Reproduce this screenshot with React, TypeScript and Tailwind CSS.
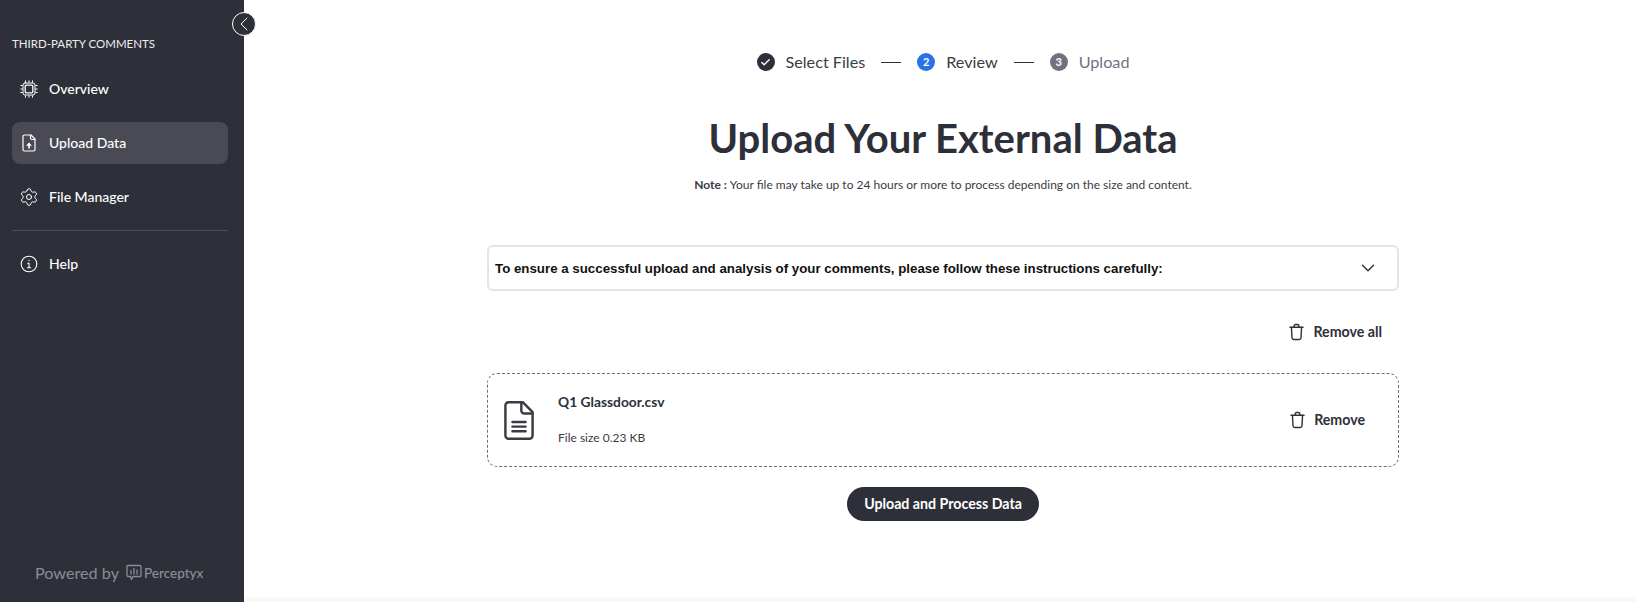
import { ChevronDown, ChevronLeft, Settings, Check } from "lucide-react";

const font = "font-['Lato','Liberation_Sans',sans-serif]";

function Trash() {
  return (
    <svg width="15" height="18" viewBox="0 0 16 18" fill="none" stroke="#2d3039" strokeWidth="1.5" strokeLinecap="round" strokeLinejoin="round">
      <path d="M1 4h14" />
      <path d="M5.5 3.8V2.4C5.5 1.6 6.1 1 6.9 1h2.2c.8 0 1.4.6 1.4 1.4v1.4" />
      <path d="M2.6 4.2l.6 11c.05.9.7 1.8 1.8 1.8h6c1.1 0 1.75-.9 1.8-1.8l.6-11" />
    </svg>
  );
}

function Chip() {
  return (
    <svg width="20" height="20" viewBox="0 0 20 20" fill="none" stroke="#fff" strokeLinecap="round">
      <rect x="4" y="4" width="12" height="12" rx="2" strokeWidth="1" />
      <rect x="6.2" y="6.2" width="7.6" height="7.6" rx="1" strokeWidth="1.3" />
      <path strokeWidth="1" d="M6.5 1.8V3.2M10 1.8V3.2M13.5 1.8V3.2M6.5 16.8V18.2M10 16.8V18.2M13.5 16.8V18.2M1.8 6.5H3.2M1.8 10H3.2M1.8 13.5H3.2M16.8 6.5H18.2M16.8 10H18.2M16.8 13.5H18.2" />
    </svg>
  );
}

function FileArrow() {
  return (
    <svg width="20" height="20" viewBox="0 0 20 20" fill="none" stroke="#fff" strokeWidth="1.2" strokeLinecap="round" strokeLinejoin="round">
      <path d="M12 2H5.5A1.5 1.5 0 0 0 4 3.5v13A1.5 1.5 0 0 0 5.5 18h9a1.5 1.5 0 0 0 1.5-1.5V6z" />
      <path d="M11.5 2.2V5a1.5 1.5 0 0 0 1.5 1.5h3" />
      <path d="M10 15v-4.5" strokeWidth="1.6" />
      <path d="M7.8 12.3L10 10l2.2 2.3z" fill="#fff" strokeWidth="0.6" />
    </svg>
  );
}

function InfoSerif() {
  return (
    <svg width="20" height="20" viewBox="0 0 20 20" fill="none" stroke="#fff" strokeWidth="1.1" strokeLinecap="round">
      <circle cx="10" cy="10" r="7.8" />
      <circle cx="10" cy="6.5" r="0.7" fill="#fff" stroke="none" />
      <path d="M8.6 9.2H10v4.6M8.4 13.8h3.2" />
    </svg>
  );
}

function NavItem({ icon, label, active }: { icon: React.ReactNode; label: string; active?: boolean }) {
  return (
    <div className={`flex h-[42px] items-center rounded-lg pl-[7px] text-[14px] font-medium text-white ${active ? "bg-[#494a54]" : ""}`}>
      <span className="flex w-[30px] shrink-0 items-center justify-start">{icon}</span>
      <span className="pb-[2px]">{label}</span>
    </div>
  );
}

function Step({ mark, label, bg, text }: { mark: React.ReactNode; label: string; bg: string; text: string }) {
  return (
    <div className="flex items-center gap-[11px]">
      <span className={`flex h-[18px] w-[18px] items-center justify-center rounded-full text-[11px] font-bold text-white ${bg}`}>{mark}</span>
      <span className={`text-[16.2px] ${text}`}>{label}</span>
    </div>
  );
}

export default function App() {
  return (
    <div className={`flex h-[602px] w-[1637px] overflow-hidden bg-white text-[#2d3039] ${font}`}>
      <aside className="relative flex w-[244px] shrink-0 flex-col bg-[#2d3039] pl-3 pr-4 text-white">
        <button className="absolute right-[-12px] top-[12px] flex h-[24px] w-[24px] items-center justify-center rounded-full border border-white bg-[#2d3039]">
          <ChevronLeft size={24} strokeWidth={1} color="#fff" className="shrink-0" />
        </button>
        <div className="mt-[35px] text-[11.5px] leading-[18px] text-[#eeeeee]">THIRD-PARTY COMMENTS</div>
        <nav className="mt-[15px] flex flex-col gap-[12px]">
          <NavItem icon={<Chip />} label="Overview" />
          <NavItem active icon={<FileArrow />} label="Upload Data" />
          <NavItem icon={<Settings size={20} strokeWidth={1.2} />} label="File Manager" />
        </nav>
        <div className="mt-[12px] h-px bg-[#4c4e57]" />
        <div className="mt-[12px]">
          <NavItem icon={<InfoSerif />} label="Help" />
        </div>
        <div className="mt-auto mb-[17px] ml-[23px] flex items-center gap-[7px] whitespace-nowrap text-[#8b8d93]">
          <span className="text-[16.2px]">Powered by</span>
          <span className="flex items-center gap-[2px] text-[13.5px] font-medium">
            <svg width="16" height="17" viewBox="0 0 16 17" fill="none" stroke="#8b8d93" strokeWidth="1.3" strokeLinejoin="round" strokeLinecap="round">
              <path d="M2 1.5h12a1 1 0 0 1 1 1v9a1 1 0 0 1-1 1H7l-1.5 3-1-3H2a1 1 0 0 1-1-1v-9a1 1 0 0 1 1-1z" />
              <path d="M5 6.5v3.5M8 4.5v5.5M11 6v4" />
            </svg>
            Perceptyx
          </span>
        </div>
      </aside>
      <main className="flex min-w-0 flex-1 flex-col">
        <div className="flex flex-1 flex-col items-center pl-[5px]">
          <div className="mt-[52px] flex h-5 items-center">
            <Step bg="bg-[#2d3039]" mark={<Check size={11} strokeWidth={3} />} label="Select Files" text="text-[#3a3c44]" />
            <span className="mx-4 h-px w-5 bg-[#2d3039]" />
            <Step bg="bg-[#2a72e5]" mark="2" label="Review" text="text-[#3a3c44]" />
            <span className="mx-4 h-px w-5 bg-[#2d3039]" />
            <Step bg="bg-[#71727f]" mark="3" label="Upload" text="text-[#71727f]" />
          </div>
          <h1 className="mt-[41px] text-[40px] leading-[50px] font-bold">Upload Your External Data</h1>
          <p className="mt-[14px] text-[12px] leading-4 text-[#3a3c44]">
            <b className="font-bold">Note : </b>Your file may take up to 24 hours or more to process depending on the size and content.
          </p>
          <div className="mt-[52px] w-[912px]">
            <div className="flex h-[46px] items-center justify-between rounded-md border-2 border-[#e4e4e4] pl-[6px] pr-[18px]">
              <span className="pt-[2px] font-['Liberation_Sans',sans-serif] text-[13.3px] font-bold text-[#111]">To ensure a successful upload and analysis of your comments, please follow these instructions carefully:</span>
              <ChevronDown size={22} strokeWidth={1.5} />
            </div>
            <div className="mt-[31px] flex h-5 items-center justify-end gap-[9px] pr-[17px] text-[14.2px] font-bold">
              <Trash />
              Remove all
            </div>
            <div className="mt-[31px] flex h-[94px] items-center rounded-[10px] border border-dashed border-[#6b6d75] pl-[16px] pr-[33px]">
              <svg width="30" height="41" viewBox="0 0 32 42" fill="none" stroke="#3a3c44" strokeWidth="2.6" strokeLinecap="round" strokeLinejoin="round">
                <path d="M20 1.5H5A3.5 3.5 0 0 0 1.5 5v32A3.5 3.5 0 0 0 5 40.5h22a3.5 3.5 0 0 0 3.5-3.5V12z" />
                <path d="M18.5 2v8.5a3 3 0 0 0 3 3h9" />
                <path d="M9 22.5h14M9 27.5h14M9 32.5h14" />
              </svg>
              <div className="ml-[24px] flex flex-1 flex-col pb-[2px]">
                <span className="text-[13.8px] font-bold leading-5">Q1 Glassdoor.csv</span>
                <span className="mt-[18px] text-[12px] leading-4 text-[#3a3c44]">File size 0.23 KB</span>
              </div>
              <div className="flex items-center gap-[9px] text-[14.2px] font-bold">
                <Trash />
                Remove
              </div>
            </div>
          </div>
          <button className="mt-[20px] h-[34px] w-[192px] rounded-full bg-[#2d3039] text-[14.2px] font-bold text-white">Upload and Process Data</button>
        </div>
        <div className="h-[5px] bg-[#f8f8f8]" />
      </main>
    </div>
  );
}
